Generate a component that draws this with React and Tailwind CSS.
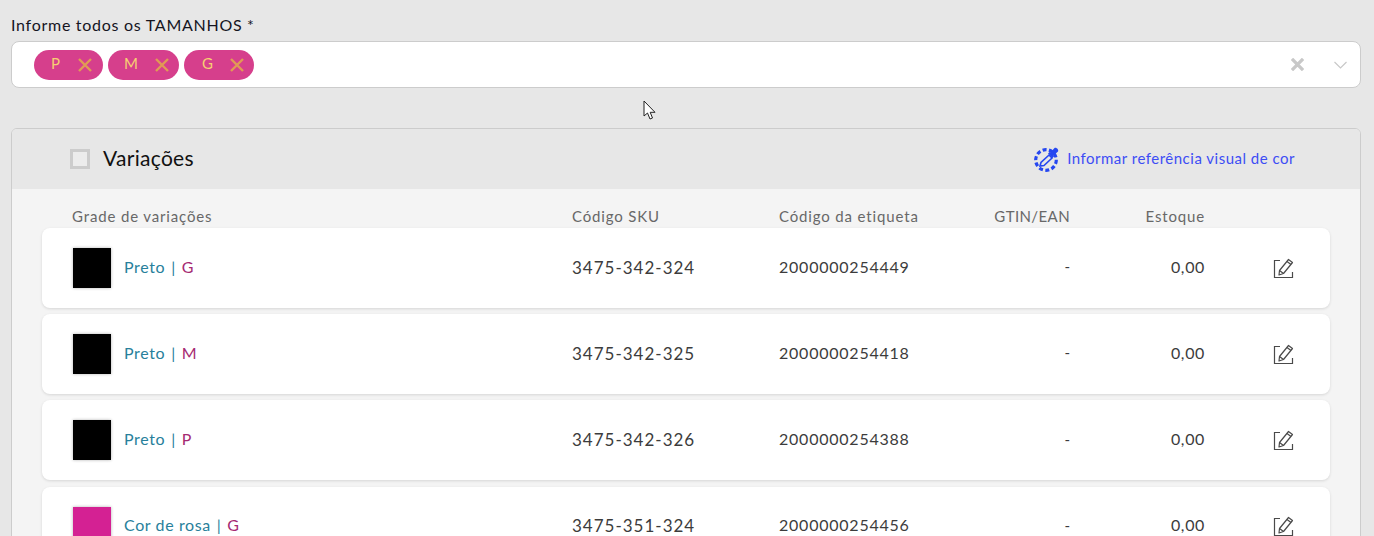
const FONT = "font-['Lato','Noto_Sans',sans-serif]";
const GRID = 'grid grid-cols-[500px_207px_150px_141px_135px_1fr] items-center';

const SIZES = [
  { label: 'P', box: 'w-[69px] pl-[17px] pr-[11px]' },
  { label: 'M', box: 'w-[71px] pl-[16px] pr-[10px]' },
  { label: 'G', box: 'w-[70px] pl-[18px] pr-[10px]' },
];

const ROWS = [
  { color: 'Preto', size: 'G', swatch: 'bg-black', sku: '3475-342-324', tag: '2000000254449' },
  { color: 'Preto', size: 'M', swatch: 'bg-black', sku: '3475-342-325', tag: '2000000254418' },
  { color: 'Preto', size: 'P', swatch: 'bg-black', sku: '3475-342-326', tag: '2000000254388' },
  { color: 'Cor de rosa', size: 'G', swatch: 'bg-[#d42193]', sku: '3475-351-324', tag: '2000000254456' },
];

const Cross = ({ size, color, weight }) => (
  <svg width={size} height={size} viewBox="0 0 14 14" fill="none" stroke={color} strokeWidth={weight}>
    <path d="M1 1L13 13M13 1L1 13" />
  </svg>
);

const EditIcon = () => (
  <svg width="21" height="21" viewBox="0 0 21 21" fill="none" stroke="#4a4a4a" strokeWidth="1.2">
    <path d="M7 2.5H1.5V19.5H19.5V14" />
    <path d="M15.5 1.5L19.5 4.5L10.5 15.5L6 17L6.5 12.5Z" strokeLinejoin="round" />
    <path d="M14 3.5L18 6.5M6.5 12.5L10.5 15.5" />
  </svg>
);

const PickerIcon = () => (
  <svg width="26" height="26" viewBox="0 0 26 26" fill="none">
    <circle cx="12" cy="14" r="10.3" stroke="#2647f0" strokeWidth="3.2" strokeDasharray="4 2.4" />
    <path d="M6 20L7 16.5L15 9L18 12L10 19.5Z" fill="#e7e7e7" stroke="#2647f0" strokeWidth="1.6" />
    <path d="M14 7.5L18.5 12L20 10.5L19.5 9.5L24 5.5C25 4 22.5 1 20.5 2L16.5 6.5L15.5 6Z" fill="#2647f0" />
  </svg>
);

const Cursor = () => (
  <svg className="absolute left-[643px] top-[100px]" width="14" height="21" viewBox="0 0 14 21">
    <path d="M1 1V16L4.5 13L7 19L9.5 18L7.2 12.3H12Z" fill="#fff" stroke="#222" strokeWidth="1" strokeLinejoin="round" />
  </svg>
);

export default function App() {
  return (
    <div className={`relative h-[536px] overflow-hidden bg-[#e7e7e7] pl-[11px] pr-[13px] ${FONT}`}>
      <div className="pt-[14px] text-[16px] leading-[21px] tracking-[0.72px] text-[#15151f]">Informe todos os TAMANHOS *</div>

      <div className="mt-[6px] flex h-[47px] items-center rounded-[8px] border border-[#cccccc] bg-white pl-[22px] pr-[13px]">
        <div className="flex gap-[5px]">
          {SIZES.map((s) => (
            <div
              key={s.label}
              className={`flex h-[30px] items-center justify-between rounded-full bg-[#d63f8c] text-[15px] text-[#f6cf72] ${s.box}`}
            >
              <span className="pb-[2px]">{s.label}</span>
              <Cross size={14} color="#e09a55" weight={2.4} />
            </div>
          ))}
        </div>
        <div className="ml-auto">
          <Cross size={13} color="#c8c8c8" weight={3.6} />
        </div>
        <svg className="ml-[30px]" width="13" height="8" viewBox="0 0 13 8" fill="none" stroke="#c8c8c8" strokeWidth="1.2">
          <path d="M0.5 1L6.5 7L12.5 1" />
        </svg>
      </div>

      <div className="mt-[40px] overflow-hidden rounded-t-[6px] border border-[#cccccc] bg-[#f4f4f4]">
        <div className="flex h-[60px] items-center bg-[#e7e7e7] pl-[58px] pr-[65px]">
          <div className="h-[20px] w-[20px] border-[3px] border-[#cccccc] bg-[#ececec]" />
          <span className="ml-[13px] pb-[2px] text-[21px] tracking-[0.3px] text-[#111111]">Variações</span>
          <div className="ml-auto flex items-center gap-[7px] text-[15px] tracking-[0.5px] text-[#3d4df5]">
            <PickerIcon />
            <span className="pb-[2px]">Informar referência visual de cor</span>
          </div>
        </div>

        <div className="px-[30px]">
          <div className={`${GRID} h-[39px] pl-[30px] pt-[16px] text-[15px] tracking-[0.85px] text-[#686868]`}>
            <span>Grade de variações</span>
            <span>Código SKU</span>
            <span>Código da etiqueta</span>
            <span className="text-right tracking-[0.4px]">GTIN/EAN</span>
            <span className="text-right">Estoque</span>
          </div>

          <div className="flex flex-col gap-[6.2px]">
            {ROWS.map((row) => (
              <div key={row.sku} className={`${GRID} h-[80px] shrink-0 rounded-[8px] bg-white pl-[30px] shadow-[0_1px_3px_rgba(0,0,0,0.12)]`}>
                <div className="flex items-center text-[16px] tracking-[0.6px]">
                  <div className={`ml-px h-[40px] w-[38px] shadow-[0_0_3px_rgba(0,0,0,0.3)] ${row.swatch}`} />
                  <span className="ml-[13px] pb-[3px] text-[#287f9b]">{row.color}</span>
                  <span className="mx-[6px] pb-[3px] text-[#287f9b]">|</span>
                  <span className="pb-[3px] text-[#a52a72]">{row.size}</span>
                </div>
                <span className="pb-[1px] text-[17px] tracking-[1px] text-[#3c3c3c]">{row.sku}</span>
                <span className="pb-[3px] text-[16px] tracking-[0.77px] text-[#3c3c3c]">{row.tag}</span>
                <span className="pb-[3px] text-right text-[15px] text-[#3c3c3c]">-</span>
                <span className="pb-[3px] text-right text-[16px] tracking-[0.65px] text-[#3c3c3c]">0,00</span>
                <div className="flex pl-[68px]">
                  <EditIcon />
                </div>
              </div>
            ))}
          </div>
        </div>
      </div>

      <Cursor />
    </div>
  );
}
